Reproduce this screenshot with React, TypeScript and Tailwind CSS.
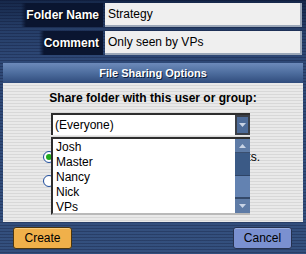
import React from "react";

const users = ["Josh", "Master", "Nancy", "Nick", "VPs"];

function Field({ label, value }: { label: string; value: string }) {
  return (
    <div className="flex h-6">
      <div className="flex flex-1 justify-end">
        <div className="flex items-center pl-[5px] pr-1 text-[12px] font-bold text-white [text-shadow:1px_1px_0_#000] [background-image:linear-gradient(90deg,rgba(10,20,44,0)_0px,#0a1530_5px)]">
          {label}
        </div>
      </div>
      <div className="ml-[2px] mr-1 flex w-[197px] items-center border-b-2 border-r-2 border-b-[#9ba7b8] border-r-[#9ba7b8] bg-[#efefef] pl-[3px] text-[12px] text-black">
        {value}
      </div>
    </div>
  );
}

function Arrow({ up }: { up?: boolean }) {
  return (
    <svg width="7" height="4" viewBox="0 0 7 4">
      <polygon points={up ? "0,4 7,4 3.5,0" : "0,0 7,0 3.5,4"} fill="#c9d4e6" />
    </svg>
  );
}

function Radio({ on }: { on?: boolean }) {
  return (
    <div className="flex h-3 w-3 shrink-0 items-center justify-center rounded-full border-[1.5px] border-[#1d4c9c] bg-white">
      {on && <div className="h-[6px] w-[6px] rounded-full bg-[#1faa1f]" />}
    </div>
  );
}

export default function App() {
  return (
    <div className="relative flex h-[254px] w-[306px] flex-col overflow-hidden pt-[3px] font-['Liberation_Sans',Arial,sans-serif] [background-image:repeating-linear-gradient(180deg,rgba(0,0,24,0.22)_0px,rgba(0,0,24,0.22)_1px,rgba(255,255,255,0)_1px,rgba(255,255,255,0)_3px),linear-gradient(180deg,#16284a_0px,#263e68_30px,#2e4876_60px,#34507e_100%)]">
      <div className="flex flex-col gap-1">
        <Field label="Folder Name" value="Strategy" />
        <Field label="Comment" value="Only seen by VPs" />
      </div>

      <div className="mx-[3px] mt-2 flex h-[159px] flex-col">
        <div className="flex h-5 items-center justify-center text-[11px] font-bold text-white [text-shadow:1px_1px_0_#0e1d3a] [background-image:linear-gradient(180deg,#6d8aba_0%,#4d6d9e_50%,#304c7c_100%)]">
          File Sharing Options
        </div>
        <div className="relative flex-1 pt-2 [background-image:repeating-linear-gradient(180deg,#e9e9e9_0px,#e9e9e9_2px,#d8d8d8_2px,#d8d8d8_3px)]">
          <div className="text-center text-[12px] font-bold leading-[14px] text-black">
            Share folder with this user or group:
          </div>

          <div className="relative ml-[48px] mt-2 w-[199px]">
            <div className="flex h-[22px] border-l-2 border-t-2 border-[#2e2e2e] bg-white">
              <div className="flex flex-1 items-center pl-[2px] text-[12px] text-black">(Everyone)</div>
              <div className="flex w-[15px] items-center justify-center border-2 border-[#3a3f48] bg-[#4d6b98]">
                <Arrow />
              </div>
            </div>

            <div className="absolute left-0 top-[24px] z-10 flex h-[78px] w-[199px] border-b-2 border-l-2 border-t-2 border-b-[#b9b9b9] border-l-[#2e2e2e] border-t-[#2e2e2e] bg-white">
              <div className="flex-1 pl-[3px] pt-[1px] text-[12px] leading-[15px] text-black">
                {users.map((u) => (
                  <div key={u}>{u}</div>
                ))}
              </div>
              <div className="flex w-[15px] flex-col bg-[#5f7eac]">
                <div className="flex h-[14px] items-center justify-center border-b border-[#3a4f70] bg-[#5e7ba6]">
                  <Arrow up />
                </div>
                <div className="h-[23px] border-b border-[#2e4466] bg-[#3b5a86]" />
                <div className="flex-1 bg-[#6382b1]" />
                <div className="flex h-[16px] items-center justify-center border-t-2 border-[#34496a] bg-[#5e7ba6]">
                  <Arrow />
                </div>
              </div>
            </div>
          </div>

          <div className="mt-4 flex flex-col gap-3 pl-[40px]">
            <div className="flex h-3 items-center gap-1">
              <Radio on />
              <div className="flex w-[201px] justify-end overflow-hidden">
                <span className="shrink-0 whitespace-nowrap text-[12px] leading-3 text-black">
                  Only this user or group can see the contents.
                </span>
              </div>
            </div>
            <div className="flex h-3 items-center gap-1">
              <Radio />
              <span className="text-[12px] leading-3 text-black">Everyone can see it</span>
            </div>
          </div>
        </div>
      </div>

      <div className="mt-[5px] flex justify-between pl-[13px] pr-[14px]">
        <button className="flex h-[22px] w-[59px] items-center justify-center rounded-[3px] border border-[#4a3510] bg-[#f0b04a] text-[12px] text-black shadow-[inset_0_1px_0_#f8cc80]">
          Create
        </button>
        <button className="flex h-[22px] w-[59px] items-center justify-center rounded-[3px] border border-[#26324f] bg-[#7a90d0] text-[12px] text-black shadow-[inset_0_1px_0_#9aaee0]">
          Cancel
        </button>
      </div>
    </div>
  );
}
